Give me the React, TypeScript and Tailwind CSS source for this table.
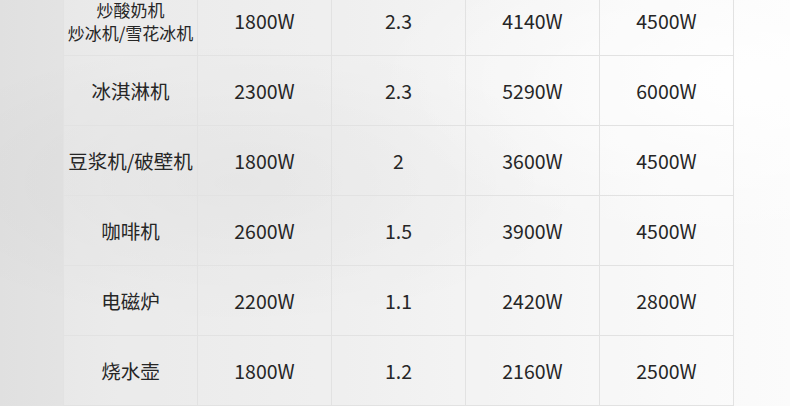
import React from 'react'

type Row = {
  name: string[]
  power: string
  factor: string
  peak: string
  suggest: string
}

const rows: Row[] = [
  { name: ['炒酸奶机', '炒冰机/雪花冰机'], power: '1800W', factor: '2.3', peak: '4140W', suggest: '4500W' },
  { name: ['冰淇淋机'], power: '2300W', factor: '2.3', peak: '5290W', suggest: '6000W' },
  { name: ['豆浆机/破壁机'], power: '1800W', factor: '2', peak: '3600W', suggest: '4500W' },
  { name: ['咖啡机'], power: '2600W', factor: '1.5', peak: '3900W', suggest: '4500W' },
  { name: ['电磁炉'], power: '2200W', factor: '1.1', peak: '2420W', suggest: '2800W' },
  { name: ['烧水壶'], power: '1800W', factor: '1.2', peak: '2160W', suggest: '2500W' },
]

const Cell = ({ children, small }: { children: React.ReactNode; small?: boolean }) => (
  <div
    className={`h-[70px] flex flex-col items-center justify-center whitespace-nowrap border-r border-b border-[#e2e2e2] bg-white/20 text-[#262626] ${
      small ? 'text-[17px] leading-[23px]' : 'text-[19.5px] leading-[24px]'
    }`}
  >
    {children}
  </div>
)

export default function App() {
  return (
    <div
      className="relative w-[790px] h-[406px] overflow-hidden bg-[linear-gradient(90deg,#e0e0e0_0%,#e6e6e6_15%,#ebebeb_40%,#f2f2f2_65%,#f8f8f8_85%,#fbfbfb_100%)]"
      style={{ fontFamily: '"Noto Sans CJK SC", "Noto Sans", sans-serif' }}
    >
      <div className="absolute inset-0 bg-[radial-gradient(ellipse_at_30%_45%,rgba(0,0,0,0.04),transparent_45%),radial-gradient(ellipse_at_95%_20%,rgba(255,255,255,0.9),transparent_35%)]" />
      <div className="relative pl-[63px] -mt-[15px]">
        <div className="grid grid-cols-[repeat(5,134px)] border-l border-t border-[#e2e2e2] w-max">
          {rows.map((r, i) => (
            <React.Fragment key={i}>
              <Cell small={r.name.length > 1}>
                {r.name.map((n) => (
                  <span key={n}>{n}</span>
                ))}
              </Cell>
              <Cell>{r.power}</Cell>
              <Cell>{r.factor}</Cell>
              <Cell>{r.peak}</Cell>
              <Cell>{r.suggest}</Cell>
            </React.Fragment>
          ))}
        </div>
      </div>
    </div>
  )
}
